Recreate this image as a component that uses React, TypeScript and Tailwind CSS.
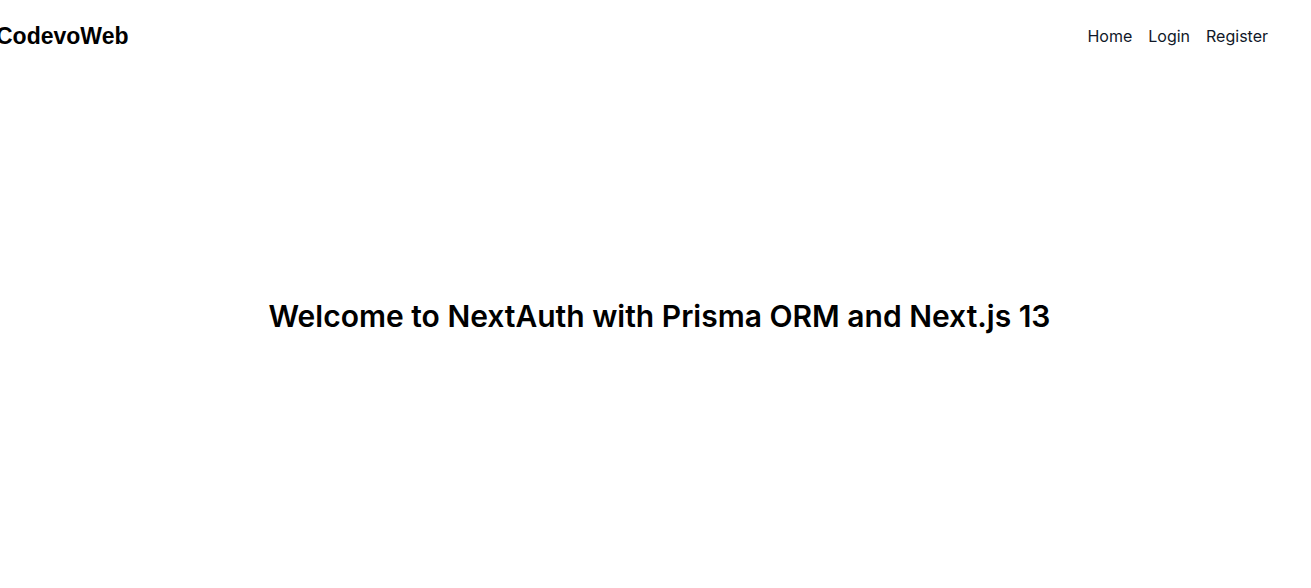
export default function App() {
  return (
    <div className="min-h-screen bg-white font-['Inter',sans-serif]">
      <header className="h-[72px] flex items-center justify-between pr-[43px]">
        <a href="#" className="-ml-[4px] text-[23px] font-bold text-black font-['Liberation_Sans',sans-serif]">
          CodevoWeb
        </a>
        <nav>
          <ul className="flex gap-4 text-base text-gray-900">
            <li><a href="#">Home</a></li>
            <li><a href="#">Login</a></li>
            <li><a href="#">Register</a></li>
          </ul>
        </nav>
      </header>
      <main className="pt-[226px] flex justify-center pl-2">
        <h1 className="text-3xl font-semibold text-black">
          Welcome to NextAuth with Prisma ORM and Next.js 13
        </h1>
      </main>
    </div>
  );
}
